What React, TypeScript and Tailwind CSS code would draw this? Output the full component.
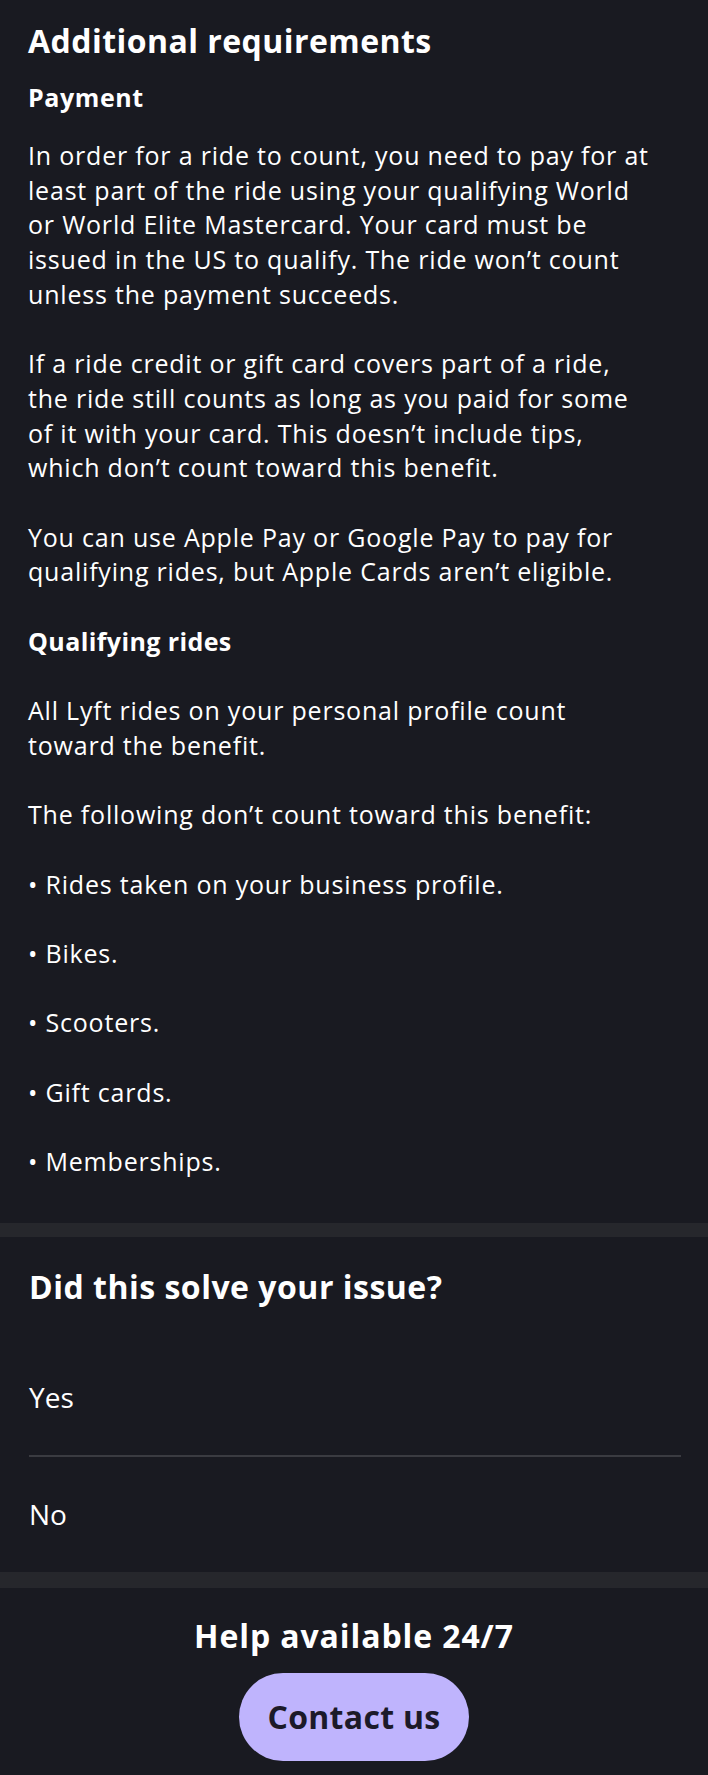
export default function App() {
  const p = "text-[25px] leading-[34.7px] tracking-[0.8px]";
  return (
    <div className="w-[708px] min-h-[1775px] bg-[#191a21] text-white font-['Open_Sans',sans-serif] antialiased">
      <section className="pl-[28px] pr-[16px] pt-[21px] pb-[44px]">
        <h1 className="text-[32px] leading-[40px] font-bold tracking-[0.45px]">Additional requirements</h1>
        <h2 className="mt-[19px] font-bold text-[25px] leading-[34.7px] tracking-[0.6px]">Payment</h2>
        <div className="mt-[23.3px]">
          <p className={p}>
            In order for a ride to count, you need to pay for at<br />
            least part of the ride using your qualifying World<br />
            or World Elite Mastercard. Your card must be<br />
            issued in the US to qualify. The ride won’t count<br />
            unless the payment succeeds.
          </p>
          <p className={`${p} mt-[34.7px]`}>
            If a ride credit or gift card covers part of a ride,<br />
            the ride still counts as long as you paid for some<br />
            of it with your card. This doesn’t include tips,<br />
            which don’t count toward this benefit.
          </p>
          <p className={`${p} mt-[34.7px]`}>
            You can use Apple Pay or Google Pay to pay for<br />
            qualifying rides, but Apple Cards aren’t eligible.
          </p>
          <p className="mt-[34.7px] font-bold text-[25px] leading-[34.7px] tracking-[0.4px]">Qualifying rides</p>
          <p className={`${p} mt-[34.7px]`}>
            All Lyft rides on your personal profile count<br />
            toward the benefit.
          </p>
          <p className={`${p} mt-[34.7px]`}>The following don’t count toward this benefit:</p>
          <p className={`${p} mt-[34.7px]`}>• Rides taken on your business profile.</p>
          <p className={`${p} mt-[34.7px]`}>• Bikes.</p>
          <p className={`${p} mt-[34.7px]`}>• Scooters.</p>
          <p className={`${p} mt-[34.7px]`}>• Gift cards.</p>
          <p className={`${p} mt-[34.7px]`}>• Memberships.</p>
        </div>
      </section>
      <div className="h-[14px] bg-[#26272c]" />
      <section className="px-[29px]">
        <h2 className="pt-[30px] text-[32px] leading-[40px] font-bold h-[102px] tracking-[0.5px]">Did this solve your issue?</h2>
        <button className="w-full h-[116px] flex items-center text-left text-[28px] leading-[34px]">Yes</button>
        <div className="h-[2px] bg-[#3a3b41] mr-[-2px]" />
        <button className="w-full h-[115px] flex items-center text-left text-[28px] leading-[34px]">No</button>
      </section>
      <div className="h-[16px] bg-[#26272c]" />
      <section className="flex flex-col items-center pt-[27.6px] pb-[14px]">
        <h3 className="text-[32px] leading-[40px] font-bold tracking-[0.9px]">Help available 24/7</h3>
        <button className="mt-[17.4px] w-[230px] h-[88px] rounded-full bg-[#bfb4fd] text-[#1c1a29] text-[32px] font-bold leading-none tracking-[0.3px]">
          Contact us
        </button>
      </section>
    </div>
  );
}
